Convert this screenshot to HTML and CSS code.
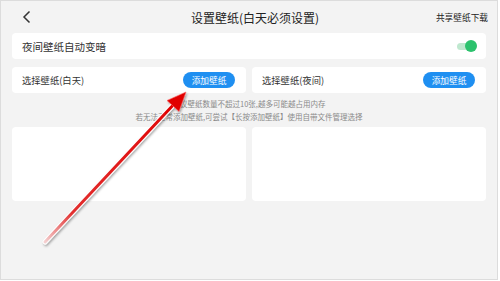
FILE: index.html
```html
<!DOCTYPE html>
<html lang="zh-CN">
  <head>
    <meta charset="UTF-8" />
    <meta name="viewport" content="width=device-width, initial-scale=1.0" />
    <title>设置壁纸</title>
    <link rel="stylesheet" href="styles.css">
  </head>

  <body>
    <div class="screen">
      <div class="header">
        <svg class="back" width="10" height="14" viewBox="0 0 10 14">
          <polyline points="7.5,1.5 2,7 7.5,12.5" fill="none" stroke="#333" stroke-width="1.5" />
        </svg>
        <div class="title">设置壁纸(白天必须设置)</div>
        <div class="share">共享壁纸下载</div>
      </div>

      <div class="card row">
        <span class="label big">夜间壁纸自动变暗</span>
        <div class="toggle"><span class="knob"></span></div>
      </div>

      <div class="pair">
        <div class="card row">
          <span class="label">选择壁纸(白天)</span>
          <button type="button" class="add">添加壁纸</button>
        </div>
        <div class="card row">
          <span class="label">选择壁纸(夜间)</span>
          <button type="button" class="add">添加壁纸</button>
        </div>
      </div>

      <div class="note">
        <p>建议壁纸数量不超过10张,越多可能越占用内存</p>
        <p>若无法正常添加壁纸,可尝试【长按添加壁纸】使用自带文件管理选择</p>
      </div>

      <div class="pair">
        <div class="card preview"></div>
        <div class="card preview"></div>
      </div>

      <!-- red annotation arrow drawn over the page -->
      <svg class="arrow" width="500" height="281" viewBox="0 0 500 281">
        <defs>
          <linearGradient id="shaft" x1="45" y1="242" x2="180" y2="99" gradientUnits="userSpaceOnUse">
            <stop offset="0" stop-color="#f4d0d0" />
            <stop offset="0.2" stop-color="#e23030" />
            <stop offset="1" stop-color="#e00000" />
          </linearGradient>
          <filter id="shadow" x="-20%" y="-20%" width="140%" height="140%">
            <feDropShadow dx="1" dy="1.5" stdDeviation="1" flood-color="#000" flood-opacity="0.35" />
          </filter>
        </defs>
        <g filter="url(#shadow)">
          <line x1="45" y1="242" x2="176" y2="102" stroke="#fff" stroke-width="5" stroke-linecap="round" />
          <line x1="45" y1="242" x2="176" y2="102" stroke="url(#shaft)" stroke-width="3" stroke-linecap="round" />
          <polygon points="186,92 179,111.5 167,100.5" fill="#e00000" stroke="#f66" stroke-width="0.6" />
        </g>
      </svg>
    </div>
  </body>
</html>
```

FILE: styles.css
```css
html {
  background: #fff;
}

body {
  margin: 0;
  font-family: "Noto Sans CJK SC", "Noto Sans", sans-serif;
  color: #333;
}

.screen {
  position: relative;
  box-sizing: border-box;
  width: 498px;
  height: 280px;
  margin: 0 1px 0 0;
  border: 1px solid #dcdcdc;
  background: #f3f3f3;
  padding: 0 11px;
  overflow: hidden;
}

.header {
  display: grid;
  grid-template-columns: 1fr auto 1fr;
  align-items: center;
  height: 32px;
  margin: 0 -2px 0 -11px;
  padding-left: 21px;
}

.back {
  display: block;
}

.title {
  font-size: 12px;
  color: #222;
}

.share {
  justify-self: end;
  font-size: 8.7px;
  color: #222;
}

.card {
  background: #fff;
  border-radius: 4px;
}

.row {
  display: flex;
  align-items: center;
  justify-content: space-between;
  height: 26px;
  padding: 0 10px 0 10px;
  box-sizing: border-box;
}

.label {
  font-size: 9.3px;
  color: #333;
}

.label.big {
  font-size: 10.5px;
}

.toggle {
  position: relative;
  width: 19px;
  height: 7px;
  border-radius: 4px;
  background: #bfe8cf;
}

.knob {
  position: absolute;
  right: -1px;
  top: -2.5px;
  width: 12px;
  height: 12px;
  border-radius: 50%;
  background: #2cc26d;
}

.pair {
  display: grid;
  grid-template-columns: 1fr 1fr;
  gap: 6px;
  margin-top: 8px;
}

.pair .row {
  padding-right: 11px;
}

.add {
  height: 16px;
  width: 52px;
  border: none;
  border-radius: 8px;
  background: #1f8ff1;
  color: #fff;
  font-family: inherit;
  font-size: 8.7px;
  padding: 0;
}

.note {
  padding: 5px 0 4px;
  text-align: center;
  color: #8a8a8a;
  font-size: 7.5px;
}

.note p {
  margin: 0;
  line-height: 12.5px;
}

.note + .pair {
  margin-top: 0;
}

.preview {
  height: 74px;
}

.arrow {
  position: absolute;
  left: -1px;
  top: -1px;
  pointer-events: none;
}
```
